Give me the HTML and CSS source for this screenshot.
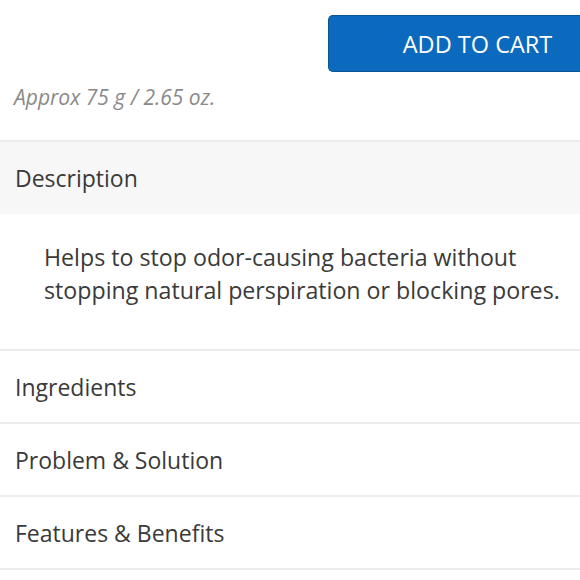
FILE: index.html
```html
<!DOCTYPE html>
<html>
<head>
<meta charset="utf-8">
<link rel="stylesheet" href="styles.css">
</head>
<body>
<div class="page">
  <div class="buy-row">
    <button class="add-btn">ADD TO CART</button>
  </div>
  <p class="weight">Approx 75 g / 2.65 oz.</p>
  <div class="accordion">
    <div class="item open">
      <div class="item-head">Description</div>
      <div class="item-body">Helps to stop odor-causing bacteria without<br>stopping natural perspiration or blocking pores.</div>
    </div>
    <div class="item">
      <div class="item-head">Ingredients</div>
    </div>
    <div class="item">
      <div class="item-head">Problem &amp; Solution</div>
    </div>
    <div class="item">
      <div class="item-head">Features &amp; Benefits</div>
    </div>
  </div>
</div>
</body>
</html>
```

FILE: styles.css
```css
html, body {
  margin: 0;
  padding: 0;
  background: #ffffff;
  overflow: hidden;
}
body {
  font-family: "Open Sans", "Lato", sans-serif;
  color: #333333;
}
.page {
  width: 580px;
}
.buy-row {
  display: flex;
  justify-content: flex-end;
  padding-top: 15px;
}
.add-btn {
  width: 252px;
  height: 57px;
  background: #0b6abd;
  border: 1.5px solid #0a5594;
  border-right: none;
  border-radius: 5px 0 0 5px;
  color: #ffffff;
  font-family: inherit;
  font-size: 23.5px;
  padding: 0 0 0 46px;
}
.weight {
  margin: 0;
  padding: 11px 0 0 14px;
  height: 57px;
  font-style: italic;
  font-size: 21px;
  color: #8a8a8a;
}
.item {
  border-top: 2px solid #ececec;
}
.item:last-child {
  border-bottom: 2px solid #ececec;
}
.item-head {
  height: 71px;
  display: flex;
  align-items: center;
  padding-left: 15px;
  font-size: 23px;
  color: #3a3a3a;
}
.item.open .item-head {
  height: 72px;
  background: #f7f7f7;
}
.item-body {
  padding: 27px 0 42px 44px;
  font-size: 23.2px;
  line-height: 33px;
  white-space: nowrap;
  color: #3a3a3a;
}
```
